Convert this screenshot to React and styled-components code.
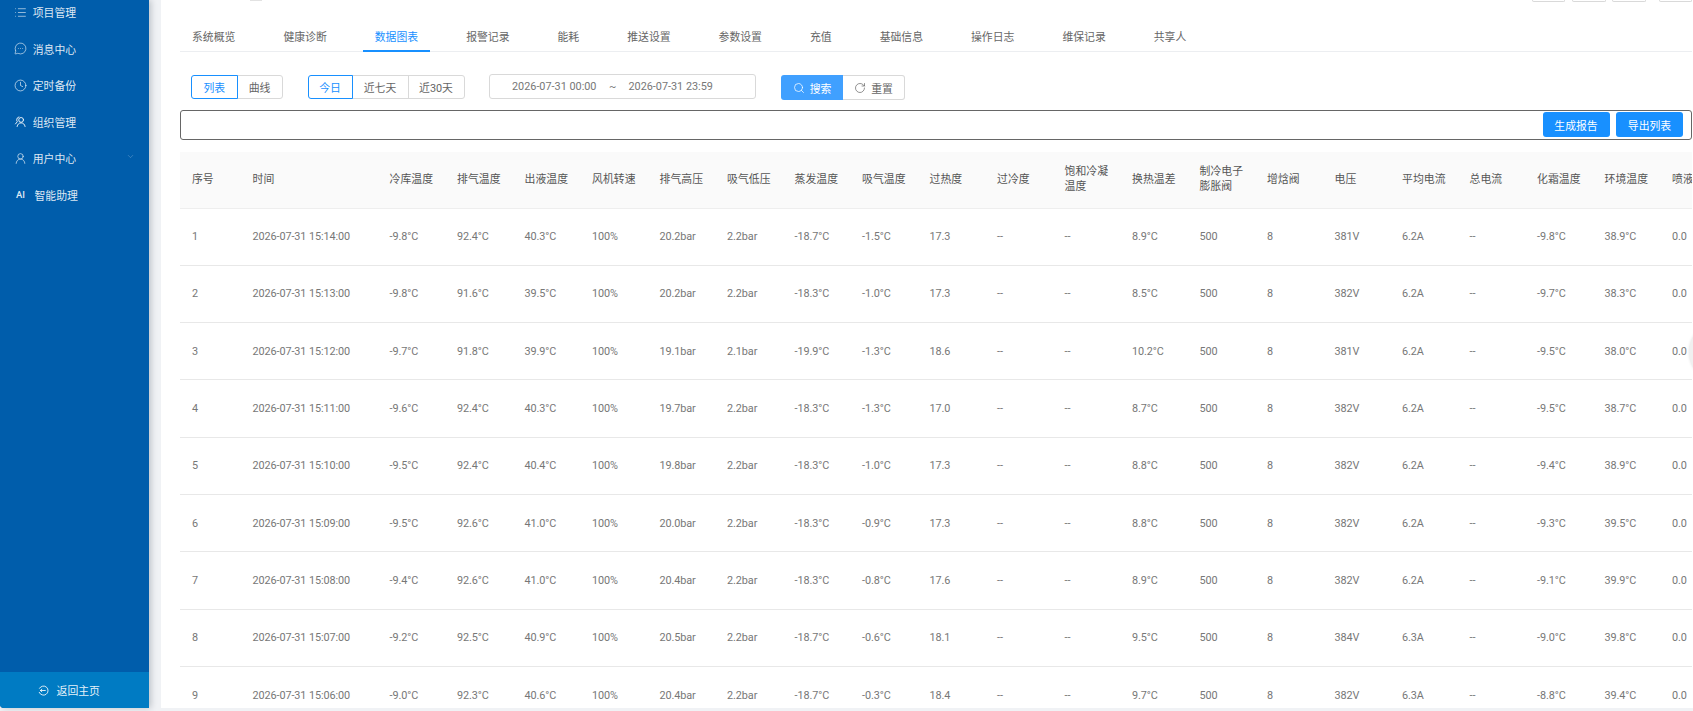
import React from 'react';
import styled, { createGlobalStyle } from 'styled-components';
import { List, MessageCircleMore, Clock, UserRound, ChevronDown, Search, RotateCw } from 'lucide-react';

const Global = createGlobalStyle`
  html, body { margin: 0; padding: 0; background: #f0f2f5; overflow: hidden; }
  * { box-sizing: border-box; }
  body { font-family: Roboto, "Noto Sans CJK SC", sans-serif; font-size: 10.85px; color: #666; }
`;

const Page = styled.div`
  position: relative;
  display: flex;
  width: 1693px;
  height: 711px;
  overflow: hidden;
  align-items: flex-start;
`;

const Sidebar = styled.aside`
  display: flex;
  flex-direction: column;
  flex: none;
  width: 149px;
  height: 708px;
  background: #005dab;
  border-radius: 0 0 0 4px;
  box-shadow: 2px 0 6px rgba(0, 21, 41, 0.22);
  overflow: hidden;
`;

const Menu = styled.nav`
  display: flex;
  flex-direction: column;
  margin-top: -6.3px;
`;

const MenuItem = styled.div`
  display: flex;
  align-items: center;
  height: 36.6px;
  padding-left: ${p => (p.$ai ? '16px' : '14px')};
  gap: ${p => (p.$ai ? '8.5px' : '5.7px')};
  color: rgba(255, 255, 255, 0.88);
  font-size: 10.85px;
  position: relative;
  svg { flex: none; }
`;

const AiMark = styled.span`
  font-size: 9.5px;
  font-weight: 500;
  width: 10px;
`;

const Caret = styled.span`
  display: flex;
  margin-left: auto;
  margin-right: 14px;
  margin-top: -3px;
  color: rgba(255, 255, 255, 0.4);
`;

const HomeLink = styled.div`
  margin-top: auto;
  display: flex;
  align-items: center;
  justify-content: center;
  gap: 7.5px;
  height: 36px;
  padding-right: 11px;
  background: #007bc3;
  color: rgba(255, 255, 255, 0.92);
`;

const Main = styled.main`
  flex: none;
  width: 1532px;
  height: 708px;
  margin-left: 12px;
  padding: 0 1px 0 19px;
  background: #fff;
  overflow: hidden;
`;

const TopStubs = styled.div`
  display: flex;
  justify-content: flex-end;
  height: 2px;
  overflow: hidden;
`;

const StubText = styled.div`
  flex: none;
  width: 12px;
  height: 1px;
  margin-left: 70px;
  margin-right: auto;
  background: #e2e2e2;
`;

const StubButton = styled.div`
  flex: none;
  width: 33.5px;
  height: 2px;
  margin-left: ${p => p.$gap}px;
  border: 1px solid #d9d9d9;
  border-top: 0;
  border-radius: 0 0 3px 3px;
`;

const Tabs = styled.div`
  display: flex;
  gap: 24px;
  height: 50px;
  border-bottom: 1px solid #eceef1;
`;

const Tab = styled.div`
  height: 50px;
  padding: 20px 12px 0;
  display: flex;
  align-items: center;
  color: ${p => (p.$active ? '#1890ff' : '#666')};
  border-bottom: 2px solid ${p => (p.$active ? '#1890ff' : 'transparent')};
  white-space: nowrap;
`;

const Controls = styled.div`
  display: flex;
  align-items: center;
  height: 25px;
  margin-top: 22.5px;
  padding-left: 11px;
`;

const Segments = styled.div`
  display: flex;
  margin-right: ${p => p.$after}px;
`;

const Segment = styled.div`
  display: flex;
  align-items: center;
  justify-content: center;
  width: ${p => p.$w}px;
  height: 24px;
  margin-left: -1px;
  position: relative;
  z-index: ${p => (p.$active ? 1 : 0)};
  color: ${p => (p.$active ? '#1890ff' : '#666')};
  border: 1px solid ${p => (p.$active ? '#1890ff' : '#d9d9d9')};
  &:first-child { margin-left: 0; border-radius: 3px 0 0 3px; }
  &:last-child { border-radius: 0 3px 3px 0; }
`;

const DateRange = styled.div`
  display: flex;
  align-items: center;
  width: 266.5px;
  height: 24.5px;
  margin-top: -1px;
  margin-right: 25.5px;
  padding-left: 22px;
  border: 1px solid #d9d9d9;
  border-radius: 3px;
  color: #777;
`;

const Tilde = styled.span`
  width: 19.5px;
  margin-left: 12.5px;
`;

const ActionGroup = styled.div`
  display: flex;
  margin-top: 1px;
`;

const SearchBtn = styled.div`
  display: flex;
  align-items: center;
  justify-content: center;
  gap: 5px;
  width: 62px;
  height: 25px;
  background: #40a0ff;
  color: #fff;
  border-radius: 3px 0 0 3px;
`;

const ResetBtn = styled.div`
  display: flex;
  align-items: center;
  justify-content: center;
  gap: 5px;
  width: 62px;
  height: 25px;
  border: 1px solid #d9d9d9;
  border-left: 0;
  border-radius: 0 3px 3px 0;
  color: #666;
`;

const ActionBar = styled.div`
  display: flex;
  justify-content: flex-end;
  align-items: center;
  gap: 6.5px;
  height: 30px;
  margin-top: 10px;
  padding-right: 8px;
  border: 1px solid #666;
  border-radius: 3px;
`;

const PrimaryBtn = styled.div`
  display: flex;
  align-items: center;
  justify-content: center;
  width: 67px;
  height: 24.5px;
  border-radius: 3px;
  background: #1890ff;
  color: #fff;
`;

const TableWrap = styled.div`
  margin-top: 12.5px;
  overflow: hidden;
`;

const Table = styled.table`
  border-collapse: separate;
  border-spacing: 0;
  table-layout: fixed;
  width: 1547.6px;
`;

const Th = styled.th`
  height: 56.5px;
  padding: 0 4px 0 12px;
  background: #fafafa;
  border-bottom: 1px solid #eeeeee;
  font-weight: 400;
  text-align: left;
  color: #555;
  line-height: 14.5px;
  overflow: hidden;
`;

const Td = styled.td`
  height: 57.3px;
  padding: 0 0 0 12px;
  border-bottom: 1px solid #e8e8e8;
  color: #777;
  letter-spacing: -0.1px;
  white-space: nowrap;
  overflow: hidden;
`;

const Floater = styled.div`
  position: absolute;
  left: 1689px;
  top: 322px;
  width: 60px;
  height: 60px;
  border-radius: 50%;
  background: #f0f0f0;
  box-shadow: 0 0 3px rgba(0, 0, 0, 0.12);
`;

const OrgIcon = () => (
  <svg width="13" height="13" viewBox="-0.5 -0.5 13 13" fill="none" stroke="currentColor" strokeWidth="1" strokeLinecap="round">
    <circle cx="6.6" cy="4.4" r="2.4" />
    <path d="M2.6 11c.5-2.4 2-3.6 4-3.6s3.5 1.2 4 3.6" />
    <path d="M4.4 1.4A3 3 0 0 0 2.2 4.4c0 .8.3 1.3.6 1.8L1 8.4" />
  </svg>
);

const BackIcon = () => (
  <svg width="11" height="11" viewBox="0 0 12 12" fill="none" stroke="currentColor" strokeWidth="1" strokeLinecap="round" strokeLinejoin="round">
    <path d="M1.6 3.6A5 5 0 1 1 1.3 8" />
    <path d="M8 6H2.6M4.2 4.5 2.6 6l1.6 1.5" />
  </svg>
);

const tabs = ['系统概览', '健康诊断', '数据图表', '报警记录', '能耗', '推送设置', '参数设置', '充值', '基础信息', '操作日志', '维保记录', '共享人'];

const headers = ['序号', '时间', '冷库温度', '排气温度', '出液温度', '风机转速', '排气高压', '吸气低压', '蒸发温度', '吸气温度', '过热度', '过冷度', '饱和冷凝温度', '换热温差', '制冷电子膨胀阀', '增焓阀', '电压', '平均电流', '总电流', '化霜温度', '环境温度', '喷液阀'];

const raw = [
  ['15:14:00', -9.8, 92.4, 40.3, 20.2, 2.2, -18.7, -1.5, 17.3, 8.9, 381, 6.2, -9.8, 38.9],
  ['15:13:00', -9.8, 91.6, 39.5, 20.2, 2.2, -18.3, -1.0, 17.3, 8.5, 382, 6.2, -9.7, 38.3],
  ['15:12:00', -9.7, 91.8, 39.9, 19.1, 2.1, -19.9, -1.3, 18.6, 10.2, 381, 6.2, -9.5, 38.0],
  ['15:11:00', -9.6, 92.4, 40.3, 19.7, 2.2, -18.3, -1.3, 17.0, 8.7, 382, 6.2, -9.5, 38.7],
  ['15:10:00', -9.5, 92.4, 40.4, 19.8, 2.2, -18.3, -1.0, 17.3, 8.8, 382, 6.2, -9.4, 38.9],
  ['15:09:00', -9.5, 92.6, 41.0, 20.0, 2.2, -18.3, -0.9, 17.3, 8.8, 382, 6.2, -9.3, 39.5],
  ['15:08:00', -9.4, 92.6, 41.0, 20.4, 2.2, -18.3, -0.8, 17.6, 8.9, 382, 6.2, -9.1, 39.9],
  ['15:07:00', -9.2, 92.5, 40.9, 20.5, 2.2, -18.7, -0.6, 18.1, 9.5, 384, 6.3, -9.0, 39.8],
  ['15:06:00', -9.0, 92.3, 40.6, 20.4, 2.2, -18.7, -0.3, 18.4, 9.7, 382, 6.3, -8.8, 39.4],
];

const f1 = n => n.toFixed(1);
const deg = n => `${f1(n)}°C`;

const rows = raw.map((r, i) => [
  String(i + 1),
  `2026-07-31 ${r[0]}`,
  deg(r[1]), deg(r[2]), deg(r[3]), '100%',
  `${f1(r[4])}bar`, `${f1(r[5])}bar`,
  deg(r[6]), deg(r[7]), f1(r[8]), '--', '--', deg(r[9]),
  '500', '8', `${r[10]}V`, `${f1(r[11])}A`, '--',
  deg(r[12]), deg(r[13]), '0.0',
]);

const widths = headers.map((_, i) => (i === 0 ? 60.6 : i === 1 ? 137 : 67.5));

export default function App() {
  return (
    <Page>
      <Global />
      <Sidebar>
        <Menu>
          <MenuItem><List size={13} strokeWidth={1.2} />项目管理</MenuItem>
          <MenuItem><MessageCircleMore size={13} strokeWidth={1.2} />消息中心</MenuItem>
          <MenuItem><Clock size={13} strokeWidth={1.3} />定时备份</MenuItem>
          <MenuItem><OrgIcon />组织管理</MenuItem>
          <MenuItem>
            <UserRound size={13} strokeWidth={1.3} />用户中心
            <Caret><ChevronDown size={9} strokeWidth={1.4} /></Caret>
          </MenuItem>
          <MenuItem $ai><AiMark>AI</AiMark>智能助理</MenuItem>
        </Menu>
        <HomeLink><BackIcon />返回主页</HomeLink>
      </Sidebar>
      <Main>
        <TopStubs>
          <StubText />
          <StubButton $gap={0} />
          <StubButton $gap={7} />
          <StubButton $gap={6.5} />
          <StubButton $gap={13} />
        </TopStubs>
        <Tabs>
          {tabs.map(t => <Tab key={t} $active={t === '数据图表'}>{t}</Tab>)}
        </Tabs>
        <Controls>
          <Segments $after={25}>
            <Segment $w={46.5} $active>列表</Segment>
            <Segment $w={46}>曲线</Segment>
          </Segments>
          <Segments $after={24.5}>
            <Segment $w={45} $active>今日</Segment>
            <Segment $w={57}>近七天</Segment>
            <Segment $w={57}>近30天</Segment>
          </Segments>
          <DateRange>
            2026-07-31 00:00
            <Tilde>~</Tilde>
            2026-07-31 23:59
          </DateRange>
          <ActionGroup>
            <SearchBtn><Search size={12} strokeWidth={1.5} />搜索</SearchBtn>
            <ResetBtn><RotateCw size={12} strokeWidth={1.4} />重置</ResetBtn>
          </ActionGroup>
        </Controls>
        <ActionBar>
          <PrimaryBtn>生成报告</PrimaryBtn>
          <PrimaryBtn>导出列表</PrimaryBtn>
        </ActionBar>
        <TableWrap>
          <Table>
            <colgroup>
              {widths.map((w, i) => <col key={i} width={w} />)}
            </colgroup>
            <thead>
              <tr>{headers.map(h => <Th key={h}>{h}</Th>)}</tr>
            </thead>
            <tbody>
              {rows.map(r => (
                <tr key={r[0]}>{r.map((c, i) => <Td key={i}>{c}</Td>)}</tr>
              ))}
            </tbody>
          </Table>
        </TableWrap>
      </Main>
      <Floater />
    </Page>
  );
}
